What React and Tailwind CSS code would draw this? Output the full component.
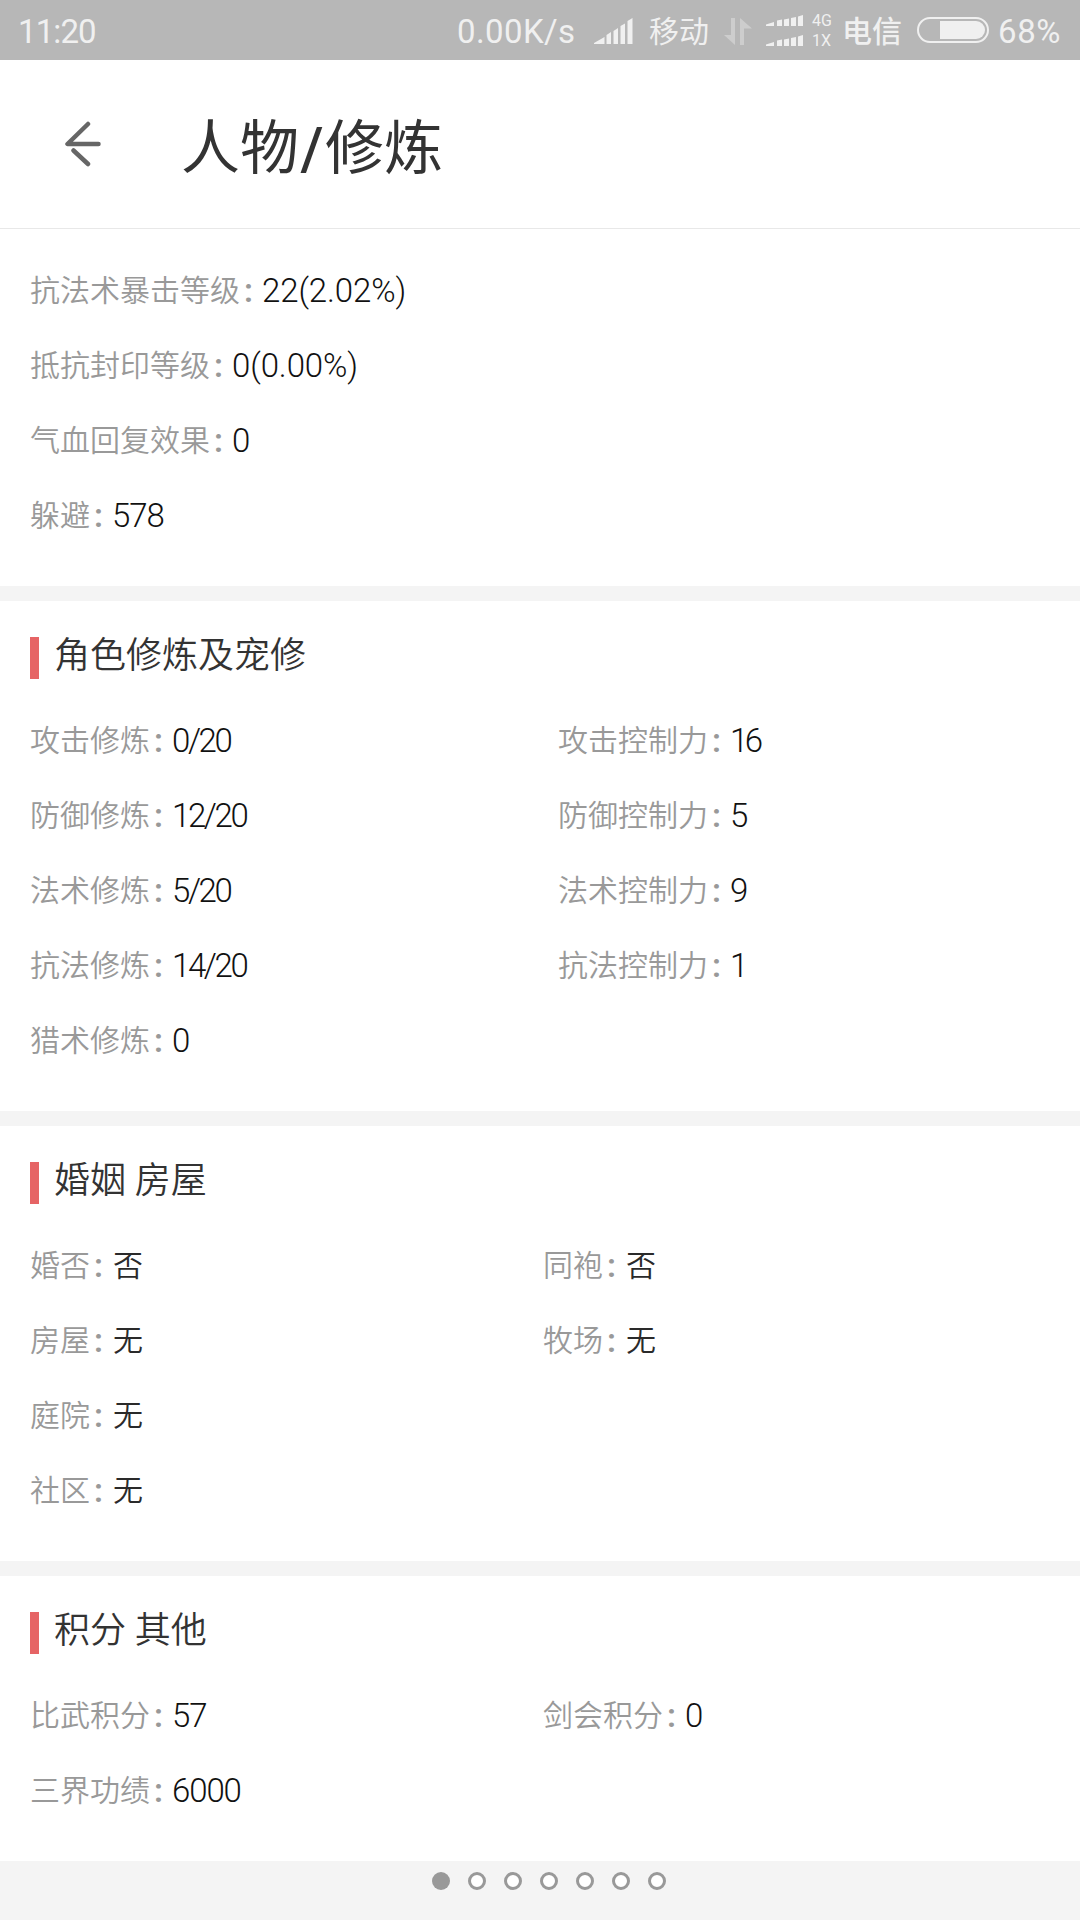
import React from 'react';

const ATTRIBUTES = [
  [{ label: '抗法术暴击等级', value: '22(2.02%)' }],
  [{ label: '抵抗封印等级', value: '0(0.00%)' }],
  [{ label: '气血回复效果', value: '0' }],
  [{ label: '躲避', value: '578' }]
];

const TRAINING = [
  [{ label: '攻击修炼', value: '0/20' }, { label: '攻击控制力', value: '16' }],
  [{ label: '防御修炼', value: '12/20' }, { label: '防御控制力', value: '5' }],
  [{ label: '法术修炼', value: '5/20' }, { label: '法术控制力', value: '9' }],
  [{ label: '抗法修炼', value: '14/20' }, { label: '抗法控制力', value: '1' }],
  [{ label: '猎术修炼', value: '0' }]
];

const MARRIAGE = [
  [{ label: '婚否', value: '否' }, { label: '同袍', value: '否' }],
  [{ label: '房屋', value: '无' }, { label: '牧场', value: '无' }],
  [{ label: '庭院', value: '无' }],
  [{ label: '社区', value: '无' }]
];

const POINTS = [
  [{ label: '比武积分', value: '57' }, { label: '剑会积分', value: '0' }],
  [{ label: '三界功绩', value: '6000' }]
];

const SmallSignal = () => (
  <svg width="38" height="12" viewBox="0 0 38 12" fill="#f0f0f0">
    <path d="M0 11V9.500L8 7V11ZM11 11V5.500L16 4.500V11ZM18 11V4.500L23 3.500V11ZM25 11V3L30 2V11ZM32 11V1.500L37 0V11Z" />
  </svg>
);

// Phone status bar
const StatusBar = () => (
  <div className="flex h-[60px] items-center bg-[#b7b7b7] px-[18px] pt-[2px] text-[33px] leading-none text-[#f0f0f0]">
    <span className="w-[80px] whitespace-nowrap tracking-[-0.9px]">11:20</span>
    <span className="ml-auto w-[121px] whitespace-nowrap tracking-[0.4px]">0.00K/s</span>
    <svg className="ml-[16px]" width="39" height="26" viewBox="0 0 39 26" fill="#f0f0f0">
      <path d="M0 26V25L10.500 19V26ZM12.500 26V17L17 14V26ZM19.500 26V13L24 10V26ZM26.500 26V8L31 5.500V26ZM33.500 26V3L38.500 0V26Z" />
    </svg>
    <span className="ml-[16px] w-[60px] whitespace-nowrap pt-[2px] text-[30px]">移动</span>
    <svg className="ml-[15px]" width="28" height="27" viewBox="0 0 28 27" fill="#cdcdcd">
      <path d="M7 0H11V27L0 17H7ZM16 0L28 10.500H20V27H16Z" />
    </svg>
    <div className="ml-[14px] flex flex-col gap-2">
      <SmallSignal />
      <SmallSignal />
    </div>
    <div className="ml-[8px] flex w-[24px] flex-col gap-[4px] text-[16px] leading-[16px]">
      <span>4G</span>
      <span>1X</span>
    </div>
    <span className="ml-[6px] w-[60px] whitespace-nowrap pt-[2px] text-[30px] font-medium">电信</span>
    <div className="-mt-[2px] ml-[15px] flex h-[26px] w-[72px] items-center justify-end rounded-full border-2 border-[#f0f0f0] pr-[2px]">
      <div className="h-[18px] w-[45px] rounded-r-full bg-[#f0f0f0]" />
    </div>
    <span className="ml-[9px] w-[64px] whitespace-nowrap tracking-[0.6px]">68%</span>
  </div>
);

const Header = () => (
  <header className="flex h-[169px] items-center border-b border-[#e8e8e8] pl-[64px]">
    <svg width="38" height="46" viewBox="0 0 38 46" fill="none" stroke="#666" strokeWidth="4.500" strokeLinecap="round" strokeLinejoin="round">
      <path d="M24 3L3.500 23H34.500M9.500 29.500L24 43" />
    </svg>
    <h1 className="ml-[79px] pt-[8px] text-[59px] font-normal leading-none text-[#333]">
      人物<span className="inline-block w-[26px] text-center font-medium">/</span>修炼
    </h1>
  </header>
);

const valueTracking = (value) => {
  if (value.includes('/')) return 'tracking-[-2.400px]';
  if (value.includes('%')) return 'tracking-[-0.100px]';
  if (value === '16') return 'tracking-[-3.500px]';
  return 'tracking-[-1.100px]';
};

const Field = ({ label, value }) => (
  <div className="flex items-center whitespace-nowrap">
    <span className="text-[30px] font-[350] text-[#999]">{label}</span>
    <span className="w-[22px] pl-[4px] text-[33px] font-semibold text-[#999]">:</span>
    <span className={/\d/.test(value) ? `text-[33px] font-[350] text-[#111] ${valueTracking(value)}` : 'pl-[1px] text-[30px] font-[350] text-[#2a2a2a]'}>
      {value}
    </span>
  </div>
);

const Section = ({ title, rows, columns }) => (
  <section className="border-b-[15px] border-[#f4f4f4] bg-white pb-[33px] pl-[30px]">
    {title ? (
      <div className="flex h-[102px] items-start pt-[36px]">
        <div className="h-[42px] w-[9px] bg-[#e66465]" />
        <h2 className="ml-[15px] pt-[1px] text-[36px] font-[350] leading-[36px] text-[#333]">{title}</h2>
      </div>
    ) : (
      <div className="h-[24px]" />
    )}
    {rows.map((row, index) => (
      <div key={index} className={`grid h-[75px] items-center ${columns}`}>
        {row.map((field) => (
          <Field key={field.label} {...field} />
        ))}
      </div>
    ))}
  </section>
);

const PageDots = () => (
  <div className="flex gap-[18px] pl-[432px] pt-[11px]">
    <div className="size-[18px] rounded-full bg-[#999]" />
    {[1, 2, 3, 4, 5, 6].map((page) => (
      <div key={page} className="size-[18px] rounded-full border-[3px] border-[#999] bg-white" />
    ))}
  </div>
);

export default function App() {
  return (
    <div className="flex h-[1920px] w-[1080px] flex-col overflow-hidden bg-white font-['Roboto','Noto_Sans_CJK_SC',sans-serif]">
      <StatusBar />
      <Header />
      <Section rows={ATTRIBUTES} columns="grid-cols-1" />
      <Section title="角色修炼及宠修" rows={TRAINING} columns="grid-cols-[528px_1fr]" />
      <Section title="婚姻 房屋" rows={MARRIAGE} columns="grid-cols-[513px_1fr]" />
      <Section title="积分 其他" rows={POINTS} columns="grid-cols-[513px_1fr]" />
      <div className="-mt-[15px] flex-1 bg-[#f4f4f4]">
        <PageDots />
      </div>
    </div>
  );
}
